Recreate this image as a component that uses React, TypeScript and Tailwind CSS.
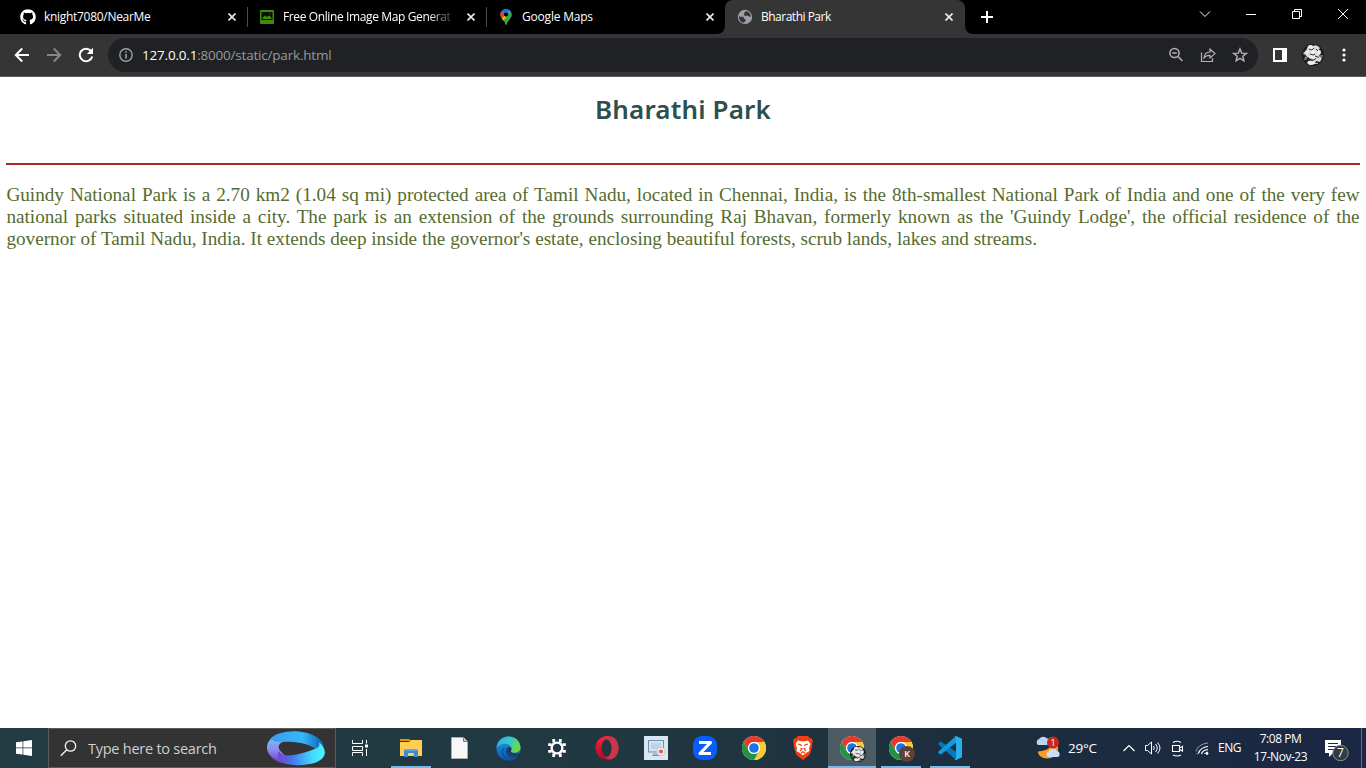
import type { ReactNode } from "react";
import { FaGithub } from "react-icons/fa";

const ui = "font-['Open_Sans','Noto_Sans',sans-serif]";

function ChromeLogo({ size = 24 }: { size?: number }) {
  return (
    <svg width={size} height={size} viewBox="0 0 48 48">
      <circle cx="24" cy="24" r="24" fill="#fff" />
      <path d="M3.2 12a24 24 0 0 1 41.6 0H24a12 12 0 0 0-10.4 18z" fill="#e33b2e" />
      <path d="M44.8 12A24 24 0 0 1 24 48l10.4-18A12 12 0 0 0 24 12z" fill="#fcc934" />
      <path d="M24 48A24 24 0 0 1 3.2 12l10.4 18a12 12 0 0 0 20.8 0z" fill="#229342" />
      <circle cx="24" cy="24" r="12" fill="#fff" />
      <circle cx="24" cy="24" r="9.6" fill="#1a73e8" />
    </svg>
  );
}

function Avatar({ size }: { size: number }) {
  return (
    <svg width={size} height={size} viewBox="0 0 22 22">
      <circle cx="11" cy="11" r="11" fill="#1c1c1c" />
      <path d="M6 2q3-2 5 0 4-2 7 2l-2 3 3 2-2 3 3 2-2 4-4-1-1 3-5 1-3-3 3-2 4-1-5-2-4 1 1-3-3-2 3-2z" fill="#d9d9d9" />
      <g fill="#efefef">
        <circle cx="8.500" cy="3.600" r="2.400" />
        <circle cx="5" cy="8" r="2" />
        <circle cx="11" cy="8" r="2.300" />
        <circle cx="17" cy="8" r="2" />
        <ellipse cx="10" cy="13" rx="3.500" ry="1.800" />
        <ellipse cx="9" cy="19" rx="3.500" ry="1.800" />
      </g>
      <path d="M7 5l3 1 2-2M8 10l3 1 2-1M13 12l4 1.500M2 12l3 1M6 16l5 .5 3-2M14 5l2 2" fill="none" stroke="#333" />
      <path d="M2 15h3M18 12h3M13 19.500h3M1.500 10h2" stroke="#bbb" />
    </svg>
  );
}

function ImageIcon() {
  return (
    <svg width="16" height="16" viewBox="0 0 16 16">
      <rect x="1" y="1" width="14" height="14" rx=".8" fill="#418a08" />
      <path d="M2.5 3h11v8h-11z" fill="#071100" />
      <path d="M3.5 10V8.8L6 6.5l2 1.5 2-1.8 2.5 2.6V10z" fill="#418a08" />
      <rect x="10.5" y="4" width="1" height="1" fill="#418a08" />
    </svg>
  );
}

function MapsIcon() {
  return (
    <svg width="16" height="16" viewBox="0 0 16 16">
      <defs>
        <clipPath id="pin">
          <path d="M8 0a5.6 5.6 0 0 0-5.6 5.6c0 2 .9 3.3 2.5 5.1C6.500 12.500 7.200 13.500 7.400 15.200q.6 1.300 1.200 0c.3-1.700 1-2.700 2.500-4.500 1.600-1.800 2.500-3.100 2.500-5.100A5.600 5.600 0 0 0 8 0z" />
        </clipPath>
      </defs>
      <g clipPath="url(#pin)">
        <rect width="16" height="16" fill="#34a853" />
        <path d="M0 0h16L8 5.500 0 5z" fill="#1a73e8" />
        <path d="M8 5.500L11.600 1 16 0v3z" fill="#4285f4" />
        <path d="M0 0l4 2 4 3.500L3.500 10 0 10z" fill="#ea4335" />
        <path d="M8 5.500L2 12l2.500 1L12 4z" fill="#fbbc04" />
        <path d="M4.500 11.500L12.500 2 16 4v12H7z" fill="#34a853" />
        <path d="M8 5.500L3 10.500l2 1L9.700 6.800z" fill="#fbbc04" />
      </g>
      <circle cx="8" cy="5.600" r="2.100" fill="#000" />
    </svg>
  );
}

function GlobeIcon() {
  return (
    <svg width="16" height="16" viewBox="0 0 16 16">
      <circle cx="8" cy="8" r="7.200" fill="#9aa0a6" />
      <path d="M2 7c1.500 1.500 3 .3 4.500 1.200 1.200.8 0 1.800 1.500 2.100 1.500.300 1 1.500 0 1.700l-.8 1.800C4 13.500 2 11 2 8zM8.500 2c.8 1-1.500 1-1.200 2.200S6 5.500 7.500 6.500s3-.5 4 .500 1.500.500 2.300 1c.300-3-2-5.600-5.300-6z" fill="#353535" />
    </svg>
  );
}

function Tab({ icon, title, tracking, active, divider, fade }: { icon: ReactNode; title: string; tracking: string; active?: boolean; divider?: boolean; fade?: boolean }) {
  return (
    <div className={`relative flex h-[34px] shrink-0 items-center pl-3 ${active ? "w-[240px] rounded-t-lg bg-[#353535]" : "w-[239px]"}`}>
      {active && (
        <>
          <svg className="absolute bottom-0 -left-2" width="8" height="8"><path d="M8 0v8H0a8 8 0 0 0 8-8z" fill="#353535" /></svg>
          <svg className="absolute -right-2 bottom-0" width="8" height="8"><path d="M0 0v8h8a8 8 0 0 1-8-8z" fill="#353535" /></svg>
        </>
      )}
      <span className="flex w-4 shrink-0">{icon}</span>
      <span className={`ml-2 w-[170px] shrink-0 overflow-hidden text-[12px] whitespace-nowrap text-white ${tracking} ${fade ? "[mask-image:linear-gradient(to_right,black_145px,transparent_174px)]" : ""}`}>{title}</span>
      <svg className="ml-[14px] shrink-0" width="8" height="8" viewBox="0 0 8 8"><path d="M.5.500l7 7M7.500.500l-7 7" stroke="#eee" strokeWidth="1.600" /></svg>
      {divider && <span className="ml-[10px] h-5 w-px shrink-0 translate-x-px bg-[#4d4d4d]" />}
    </div>
  );
}

function WindowButton({ children }: { children: ReactNode }) {
  return (
    <div className="flex h-7 w-[46px] items-center justify-center">
      <svg width="12" height="12" viewBox="0 0 12 12" fill="none" stroke="#fff">{children}</svg>
    </div>
  );
}

function Browser() {
  return (
    <header className={ui}>
      <div className="flex h-[34px] bg-black pl-2">
        <Tab icon={<FaGithub size={16} color="#fff" />} title="knight7080/NearMe" tracking="tracking-[-0.3px]" divider />
        <Tab icon={<ImageIcon />} title="Free Online Image Map Generat" tracking="tracking-[-0.38px]" divider fade />
        <Tab icon={<MapsIcon />} title="Google Maps" tracking="tracking-[-0.2px]" />
        <Tab icon={<GlobeIcon />} title="Bharathi Park" tracking="tracking-[-0.5px]" active />
        <svg className="mt-[11px] ml-4" width="12" height="12"><path d="M0 6h12M6 0v12" stroke="#fff" strokeWidth="2" /></svg>
        <div className="ml-auto flex">
          <WindowButton><path d="M1 3.500l5 5 5-5" /></WindowButton>
          <WindowButton><path d="M1 6.500h10" /></WindowButton>
          <WindowButton><path d="M1.500 3.500h7v7h-7zM3.500 3.500v-2h7v7h-2" /></WindowButton>
          <WindowButton><path d="M1 1l10 10M11 1L1 11" /></WindowButton>
        </div>
      </div>
      <div className="flex h-[43px] items-center border-b border-[#5b5b5b] bg-[#353535]">
        <svg className="ml-[14px]" width="16" height="16" viewBox="0 0 16 16" fill="none" stroke="#fff" strokeWidth="2"><path d="M15 8H2M8.200 1.500L1.800 8l6.400 6.500" /></svg>
        <svg className="ml-4" width="16" height="16" viewBox="0 0 16 16" fill="none" stroke="#868686" strokeWidth="2"><path d="M1 8h13M7.800 1.500L14.200 8l-6.400 6.500" /></svg>
        <svg className="ml-4" width="16" height="16" viewBox="0 0 16 16" fill="none" stroke="#fff" strokeWidth="2"><path d="M13 4A6.300 6.300 0 1 0 14.200 9.500" /><path d="M15 .8V7H8.800z" fill="#fff" stroke="none" /></svg>
        <div className="ml-[14px] flex h-[34px] w-[1150px] items-center rounded-full bg-[#202124] pl-[11px]">
          <svg width="14" height="14" viewBox="0 0 14 14" fill="none" stroke="#9aa0a6" strokeWidth="1.400"><circle cx="7" cy="7" r="6.200" /><path d="M7 6v4.500M7 3.200v1.500" strokeWidth="1.600" /></svg>
          <span className="ml-[9px] text-[13.500px] tracking-[-0.2px] text-[#96999d]"><span className="text-white">127.0.0.1</span>:8000/static/park.html</span>
          <div className="mr-[10px] ml-auto flex items-center gap-4 text-[#b4b4b4]">
            <svg width="16" height="16" viewBox="0 0 16 16" fill="none" stroke="currentColor" strokeWidth="1.500"><circle cx="6.500" cy="6" r="4.600" /><path d="M10 9.500l4.500 4.500M4.300 6h4.500" /></svg>
            <svg width="16" height="16" viewBox="0 0 16 16" fill="none" stroke="currentColor" strokeWidth="1.200"><path d="M1.500 5.500v9h11v-3.500" /><path d="M4 11c.3-4 2.700-5.800 6-6V2.200L15 6.600 10 11V8.300C7.500 8.200 5.500 9 4 11z" /></svg>
            <svg width="16" height="16" viewBox="0 0 16 16" fill="none" stroke="currentColor" strokeWidth="1.400"><path d="M8 1.900l1.700 4.200 4.600.3-3.500 2.900 1.100 4.500L8 11.300l-3.900 2.500 1.100-4.500L1.700 6.400l4.600-.3z" /></svg>
          </div>
        </div>
        <svg className="ml-[15px]" width="14" height="14"><path d="M1 1h12v12H1z" fill="none" stroke="#fff" strokeWidth="2" /><path d="M9 0h5v14H9z" fill="#fff" /></svg>
        <div className="ml-[15px]"><Avatar size={22} /></div>
        <svg className="ml-[18px]" width="4" height="14" fill="#fff"><circle cx="2" cy="2" r="1.600" /><circle cx="2" cy="7" r="1.600" /><circle cx="2" cy="12" r="1.600" /></svg>
      </div>
    </header>
  );
}

function TaskSlot({ children, state = "idle" }: { children: ReactNode; state?: "idle" | "open" | "focus" }) {
  return (
    <div className={`relative flex h-10 w-12 shrink-0 items-center justify-center ${state === "focus" ? "bg-[#4d5b65]" : ""}`}>
      {children}
      {state !== "idle" && <span className={`absolute bottom-0 h-[2px] bg-[#76b9ed] ${state === "focus" ? "w-12" : "w-10"}`} />}
    </div>
  );
}

function SearchArt() {
  return (
    <svg width="61" height="35" viewBox="0 0 61 35">
      <defs>
        <linearGradient id="ra" x1="0" y1="0" x2="1" y2="0"><stop offset="0" stopColor="#3b9cf0" /><stop offset=".6" stopColor="#35b8fb" /><stop offset="1" stopColor="#0a5cad" /></linearGradient>
        <linearGradient id="rb" x1="0" y1="0" x2="0" y2="1"><stop offset="0" stopColor="#75bdf5" /><stop offset=".5" stopColor="#8b83ee" /><stop offset="1" stopColor="#6a35b5" /></linearGradient>
        <linearGradient id="rc" x1="0" y1="0" x2="1" y2="0"><stop offset="0" stopColor="#7a42d0" /><stop offset=".3" stopColor="#4675ef" /><stop offset=".75" stopColor="#43dcff" /><stop offset="1" stopColor="#4ff2ff" /></linearGradient>
      </defs>
      <path d="M4 8C12-1 38-3 52 7c3 2 5 5 6 8l-8 3c-5-3-9-5-15-6-10-2-20 0-31-4z" fill="url(#ra)" />
      <path d="M5 8c5 3 10 2 15 2.500-7 .5-9 5-6 9l6 6-4 7C8 30 0 23 1 15c.4-3 1.500-5 4-7z" fill="url(#rb)" />
      <path d="M13 20c2 4 6 5 10 4.500 10-1 20-4 28-7.500 2-1 3-3 2-6 9 8 7 16-2 20-10 4-26 4-34 1-5-3-6-8-4-12z" fill="url(#rc)" />
    </svg>
  );
}

function Taskbar() {
  return (
    <footer className={`flex h-10 shrink-0 bg-[linear-gradient(90deg,#233b43_0%,#203841_45%,#1c2d3e_75%,#1a2744_100%)] text-white ${ui}`}>
      <div className="flex w-12 items-center justify-center">
        <svg width="16" height="16" viewBox="0 0 16 16" fill="#fff"><path d="M0 2.300l6.600-.9v6.200H0zM7.300 1.300L16 0v7.600H7.300zM0 8.300h6.600v6.300L0 13.700zM7.300 8.300H16V16l-8.700-1.300z" /></svg>
      </div>
      <div className="flex w-[288px] items-center border border-[#5b5b5b] bg-[#333] pl-[11px]">
        <svg width="17" height="17" viewBox="0 0 17 17" fill="none" stroke="#f5f5f5" strokeWidth="1.300"><circle cx="10.500" cy="6" r="5.200" /><path d="M6.800 9.700L.800 15.700" /></svg>
        <span className="ml-[11px] w-[178px] translate-y-px text-[14.500px] tracking-[-0.25px] whitespace-nowrap text-[#cfcfcf]">Type here to search</span>
        <SearchArt />
      </div>
      <div className="flex w-[51px] items-center pl-[15px]">
        <svg width="18" height="18" viewBox="0 0 18 18" fill="none" stroke="#fff"><path d="M1.500 1v3.500h10V1M1.500 17v-3.500h10V17M1.500 7.500h10v4h-10zM15.500 1v3.500M15.500 10v7" /><path d="M14 5.500h3v3h-3z" fill="#fff" stroke="none" /></svg>
      </div>
      <div className="flex gap-px">
        <TaskSlot state="open">
          <svg width="22" height="20" viewBox="0 0 22 20"><path d="M0 1h9l2 2H0z" fill="#dd9b00" /><path d="M0 4h9l2-2h11v16H0z" fill="#ffce53" /><path d="M4 19v-6q0-2 2-2h10q2 0 2 2v6h-4v-4H8v4z" fill="#398bd4" /><path d="M5 11h12v2H5z" fill="#56aaef" /></svg>
        </TaskSlot>
        <TaskSlot>
          <svg className="-translate-x-px" width="17" height="22" viewBox="0 0 17 22"><path d="M.5.500h12l4 4v17H.500z" fill="#f8f8f8" stroke="#ababab" /><path d="M12.500.500v4h4" fill="#ccc" stroke="#777" /></svg>
        </TaskSlot>
        <TaskSlot>
          <svg className="-translate-x-px" width="25" height="25" viewBox="0 0 25 25">
            <defs>
              <linearGradient id="ea" x1="0" y1="0" x2="1" y2=".5"><stop stopColor="#28a7df" /><stop offset=".5" stopColor="#33c6d7" /><stop offset="1" stopColor="#69dc43" /></linearGradient>
              <linearGradient id="eb" x1="0" y1="0" x2="0" y2="1"><stop stopColor="#209de3" /><stop offset="1" stopColor="#075cb5" /></linearGradient>
            </defs>
            <circle cx="12.500" cy="12.500" r="12" fill="url(#eb)" />
            <path d="M.5 12C2-3 23-3 24.500 11c.5 5-5 7-9.500 5-1.500-1 1-2 .3-4.500C14 7 5 6 .5 12z" fill="url(#ea)" />
            <path d="M9.500 11C5 15 8 22 15 22c3 0 5-.7 7.500-2.500C17 27 9 25.500 6.500 20 4.500 15 6 12 9.500 11z" fill="#1251a1" />
            <path d="M14.800 15.500c1 2.500 5 3 8.700 1.500.8-.3 1.200.3.7 1-2 3-6 4.500-9.500 3.500C10 20 8 14.500 11.500 11.500c2-1 4 0 4 1.500 0 1-.9 1.500-.7 2.500z" fill="#15447f" />
            <path d="M14.800 15.500c1 2.500 5 3 8.700 1.500l1.500.2-.8 1.300c-3 1.500-9 .5-11-2.500-1-1.700-.3-3.500.8-4 1.200 0 1.500.6 1.300 1.500-.2.800-.7 1.200-.5 2z" fill="#203842" />
          </svg>
        </TaskSlot>
        <TaskSlot>
          <svg className="-translate-x-px" width="20" height="20" viewBox="-10 -10 20 20" fill="none" stroke="#fff">
            <circle r="5.400" strokeWidth="2.400" />
            <path d="M2.400-6v-3.200M2.400 9.200V6M-2.400-6v-3.200M-2.400 9.200V6" strokeWidth="0" />
            <path d="M3.300-5.500V-9M-3.300-5.500V-9M3.300 5.500V9M-3.300 5.500V9M5.500 3.300h3.300M5.500-3.300h3.300M-5.500 3.300h-3.300M-5.500-3.300h-3.300" strokeWidth="2.800" />
          </svg>
        </TaskSlot>
        <TaskSlot>
          <svg width="24" height="24" viewBox="0 0 24 24"><defs><linearGradient id="op" x1="0" y1="0" x2="0" y2="1"><stop stopColor="#ff263b" /><stop offset="1" stopColor="#a90725" /></linearGradient></defs><ellipse cx="12" cy="12" rx="11.500" ry="12" fill="url(#op)" /><path d="M9 3c8-6 14.500 0 14.500 9S16 27 9 21c9 4 10-19 0-18z" fill="#ca354a" /><ellipse cx="11.500" cy="12" rx="5" ry="8.500" fill="#203640" /></svg>
        </TaskSlot>
        <TaskSlot>
          <svg width="24" height="24" viewBox="0 0 24 24"><rect width="24" height="24" fill="#dbe8f3" /><rect x="4.500" y="4.500" width="15" height="11.500" fill="#c0d7e8" stroke="#6d96b6" /><path d="M6 6h12v8H6z" fill="#bcd5e6" stroke="#e7f2f7" /><path d="M9 18h6M8 19.500h8" stroke="#7393af" /><circle cx="17" cy="15.500" r="4.200" fill="#eee" stroke="#b9c5cf" /><circle cx="17" cy="15.500" r="2.100" fill="#ee5555" /></svg>
        </TaskSlot>
        <TaskSlot>
          <svg width="24" height="24" viewBox="0 0 24 24"><rect width="24" height="24" rx="9" fill="#0b5cff" /><path d="M6 6.500h11.500L7 17.500h11" fill="none" stroke="#fff" strokeWidth="3.200" strokeLinejoin="round" /></svg>
        </TaskSlot>
        <TaskSlot><ChromeLogo /></TaskSlot>
        <TaskSlot>
          <svg width="20" height="24" viewBox="0 0 20 24"><path d="M5 0h10l2 2.500 1.500-.5L20 5l-1 3 .3 2L17 18l-2.500 2.500L10 24l-4.500-3.500L3 18 .700 10 1 8 0 5l1.500-3 1.500.5z" fill="#f43d12" /><path d="M5 4.500l3 .7h4l3-.7 2.500 3.500-1.500 4 .5 3-3.500 2L10 19.500 7 17l-3.500-2 .5-3L2.500 8z" fill="#fff" /><path d="M5 8l3 1 .5 1M15 8l-3 1-.5 1M7.500 12.200L9 13l-2 2M12.500 12.200L11 13l2 2M8 17l2-1.200 2 1.200" fill="none" stroke="#f43d12" strokeWidth="1.200" /></svg>
        </TaskSlot>
        <TaskSlot state="focus">
          <ChromeLogo />
          <span className="absolute top-[18px] left-[22px]"><Avatar size={16} /></span>
        </TaskSlot>
        <TaskSlot state="open">
          <ChromeLogo />
          <span className="absolute top-[18px] left-[22px] flex size-4 items-center justify-center rounded-full bg-[#5d4037] text-[9px] font-semibold">K</span>
        </TaskSlot>
        <TaskSlot state="open">
          <svg width="24" height="24" viewBox="0 0 24 24"><path d="M.4 8.500q-.5-.7 0-1.200L2 5.800q.6-.5 1.200 0L24 20l-6 4z" fill="#0877b9" /><path d="M.4 15.500q-.5.700 0 1.200L2 18.200q.6.500 1.200 0L19 6 18 0z" fill="#109be0" /><path d="M17 0q.7-.2 1 0l6 2.800v18.400L18 24q-.7.200-1.300-.3L18 22V2z" fill="#28aff0" /></svg>
        </TaskSlot>
      </div>
      <div className="ml-auto flex items-center">
        <svg width="26" height="24" viewBox="0 0 26 24"><path d="M16 3c3 7-3 12-13 12.500 0 4 4 7 9 7 8 0 12-6 11-12-1-4-4-6.500-7-7.500z" fill="#f99d26" /><path d="M3 9a3.500 3.500 0 0 1 1-6 5 5 0 0 1 8-.5A3.300 3.300 0 0 1 13.500 9z" fill="#bed4f6" /><path d="M13 21a3.300 3.300 0 0 1 1-6 4.500 4.500 0 0 1 8 0 3.200 3.200 0 0 1 1 6z" fill="#cadcf8" /><circle cx="18" cy="6.500" r="6" fill="#c42b1c" /><text x="18" y="10" fill="#fff" fontSize="9" textAnchor="middle">1</text></svg>
        <span className="ml-[7px] w-[31px] text-[13.500px] tracking-[-0.2px]">29°C</span>
        <svg className="ml-6" width="12" height="12" viewBox="0 0 12 12" fill="none" stroke="#fff" strokeWidth="1.200"><path d="M.5 9L6 3.500 11.500 9" /></svg>
        <svg className="ml-[9px]" width="18" height="16" viewBox="0 0 18 16" fill="none" stroke="#fff"><path d="M1.500 5.500h2l4-3.500v12l-4-3.500h-2zM9.500 6q1.500 2 0 4M11.500 4q3.500 4 0 8M13.500 2.500q5 5.500 0 11" /></svg>
        <svg className="ml-[9px]" width="13" height="17" viewBox="0 0 13 17" fill="none" stroke="#fff"><path d="M1.500 5.500h7v6h-7zM8.500 8L11.500 6.500v4.500L8.500 9.500M2 2.500q4-2.500 8 0M2 15q4 2 8 0" strokeWidth="1.100" /></svg>
        <svg className="ml-[11px]" width="14" height="14" viewBox="0 0 14 14" fill="none" stroke="#fff"><path d="M1 10.500Q3 3 13 2M1.500 12.500L3 13" stroke="#919ba8" /><path d="M3.500 12.500q1.500-6 9.500-7M6.500 13q1-4 6.500-4.500" strokeWidth="1.200" /><path d="M9.500 13q.8-1.700 3.500-2" /><circle cx="12" cy="12.500" r="1" fill="#fff" /></svg>
        <span className="ml-[9px] w-[24px] text-[12px] tracking-[-0.5px]">ENG</span>
        <div className="ml-[7px] w-[63px] text-center text-[12px] leading-[18px] tracking-[-0.46px] whitespace-nowrap"><div>7:08 PM</div><div>17-Nov-23</div></div>
        <div className="relative ml-[13px] h-6 w-[26px] translate-y-px">
          <svg width="26" height="24" viewBox="0 0 26 24"><path d="M0 3h16v13H8l-4 4v-4H0z" fill="#fff" /><path d="M3 6.500h10M3 9.500h10M3 12.500h7" stroke="#1b2943" /><circle cx="15.500" cy="16" r="7.700" fill="#343a42" stroke="#89909a" /></svg>
          <span className="absolute top-[8px] left-[12px] text-[12px] leading-4">7</span>
        </div>
        <span className="ml-[10px] h-10 w-px bg-[#62708a]" />
        <span className="w-1" />
      </div>
    </footer>
  );
}

export default function App() {
  return (
    <div className="flex h-screen w-full flex-col overflow-hidden bg-white">
      <Browser />
      <main className="flex-1 px-[6.400px]">
        <h1 className="mt-[13px] text-center font-['Noto_Sans',sans-serif] text-[26px] leading-[38px] font-semibold tracking-[0.150px] text-[#2f4f4f]">Bharathi Park</h1>
        <hr className="mt-[35px] border-0 border-t-2 border-[#a52a2a]" />
        <p className="mt-[19px] text-justify font-['Liberation_Serif',serif] text-[19.200px] leading-[22px] text-[#556b2f]">
          Guindy National Park is a 2.70 km2 (1.04 sq mi) protected area of Tamil Nadu, located in Chennai, India, is the 8th-smallest National Park of India and one of the very few national parks situated inside a city. The park is an extension of the grounds surrounding Raj Bhavan, formerly known as the 'Guindy Lodge', the official residence of the governor of Tamil Nadu, India. It extends deep inside the governor's estate, enclosing beautiful forests, scrub lands, lakes and streams.
        </p>
      </main>
      <Taskbar />
    </div>
  );
}
